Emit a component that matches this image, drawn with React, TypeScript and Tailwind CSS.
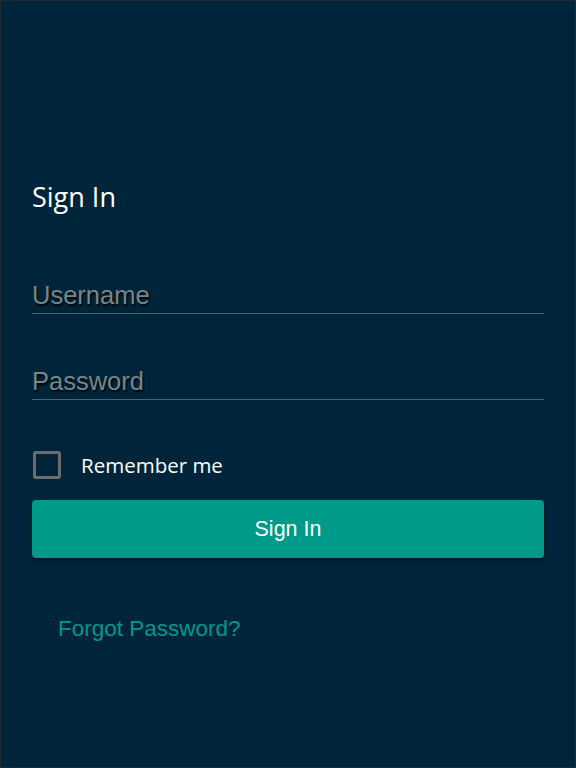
export default function App() {
  return (
    <div className="w-[576px] h-[768px] bg-[#00253a] border border-[#1e2a31] box-border">
      <div className="pt-[176px] px-[31px]">
        <h1 className="text-[27px] leading-[40px] text-white font-['Open_Sans',sans-serif]">Sign In</h1>

        <div className="mt-[55px] h-[42px] border-b border-[#3f6774] flex items-end pb-[2px]">
          <span className="text-[25.5px] leading-[32px] text-[#75868d] font-['Liberation_Sans',Arial,sans-serif] [text-shadow:1px_2px_2px_#000]">
            Username
          </span>
        </div>

        <div className="mt-[44px] h-[42px] border-b border-[#3f6774] flex items-end pb-[2px]">
          <span className="text-[25.5px] leading-[32px] text-[#75868d] font-['Liberation_Sans',Arial,sans-serif] [text-shadow:1px_2px_2px_#000]">
            Password
          </span>
        </div>

        <label className="mt-[51px] flex items-center gap-[20px]">
          <span className="w-[28px] h-[28px] border-[3px] border-[#6a6d70] rounded-[3px] ml-px" />
          <span className="text-[20.5px] leading-[28px] text-white font-['Open_Sans',sans-serif]">Remember me</span>
        </label>

        <button className="mt-[21px] w-[512px] h-[58px] bg-[#009a8a] rounded-[4px] shadow-[0_2px_4px_rgba(0,0,0,0.5)] text-white text-[21.5px] font-['Liberation_Sans',Arial,sans-serif]">
          Sign In
        </button>

        <div className="mt-[56px] pl-[26px] text-[22.5px] leading-[30px] text-[#00978a] font-['Liberation_Sans',Arial,sans-serif]">
          Forgot Password?
        </div>
      </div>
    </div>
  );
}
